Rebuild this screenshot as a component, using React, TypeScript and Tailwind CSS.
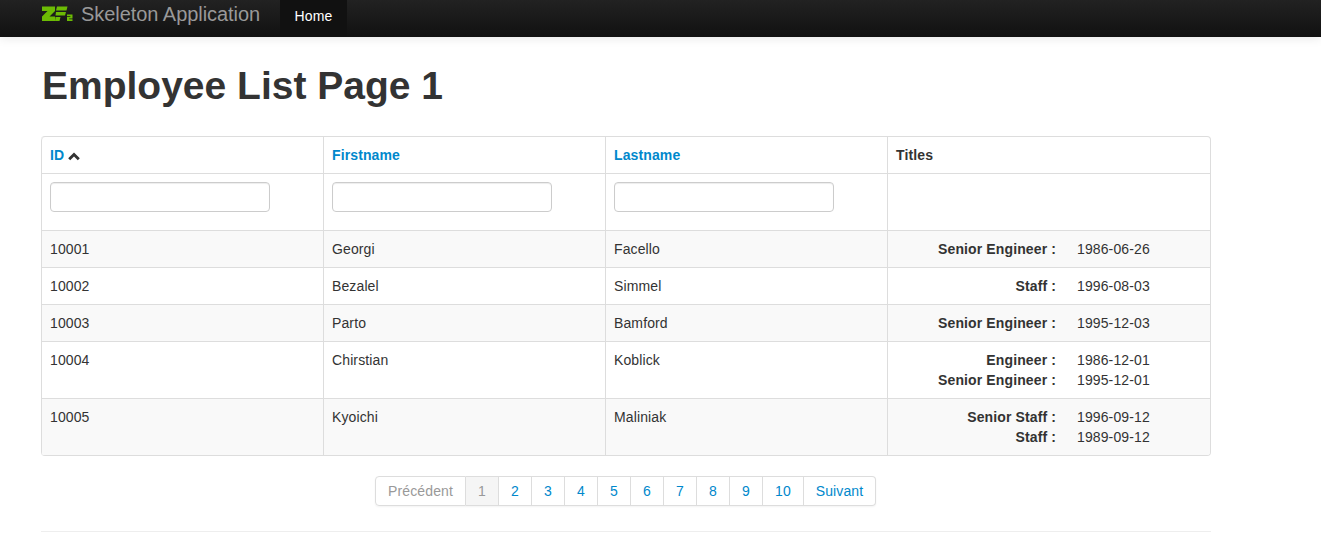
const employees = [
  { id: "10001", first: "Georgi", last: "Facello", titles: [["Senior Engineer :", "1986-06-26"]] },
  { id: "10002", first: "Bezalel", last: "Simmel", titles: [["Staff :", "1996-08-03"]] },
  { id: "10003", first: "Parto", last: "Bamford", titles: [["Senior Engineer :", "1995-12-03"]] },
  {
    id: "10004",
    first: "Chirstian",
    last: "Koblick",
    titles: [
      ["Engineer :", "1986-12-01"],
      ["Senior Engineer :", "1995-12-01"],
    ],
  },
  {
    id: "10005",
    first: "Kyoichi",
    last: "Maliniak",
    titles: [
      ["Senior Staff :", "1996-09-12"],
      ["Staff :", "1989-09-12"],
    ],
  },
];

const pages = ["2", "3", "4", "5", "6", "7", "8", "9"];

function ZfLogo() {
  return (
    <svg width="32" height="16" viewBox="0 0 32 16" className="block" fill="#6cbb04">
      <path d="M1 0.5H14V5L8.5 10.5H14V15H1V10.5L6.5 5H1Z" />
      <path d="M16 0.5H26.5L25.5 4.5H15Z" />
      <path d="M15 6H25L24 9.5H14.5Z" />
      <path d="M14.5 11H19.5L18.5 15H14Z" />
      <path d="M26 8.5H31.5V12.5H28.2V13.2H31.5V15H26V11H29.4V10.2H26Z" />
    </svg>
  );
}

function Navbar() {
  return (
    <div className="h-[37px] bg-gradient-to-b from-[#222222] to-[#111111] shadow-[0_1px_10px_rgba(0,0,0,0.1)]">
      <div className="ml-[41px] flex h-full items-stretch">
        <div className="flex w-[239px] items-center gap-[8px] pb-[9px]">
          <ZfLogo />
          <span className="text-[20px] leading-[20px] tracking-[-0.05px] text-[#999999]">Skeleton Application</span>
        </div>
        <a className="flex w-[67px] items-center justify-center bg-[#111111] pb-[5px] text-[14px] text-white">Home</a>
      </div>
    </div>
  );
}

function SortIcon() {
  return (
    <svg width="12" height="9" viewBox="0 0 12 9" className="ml-[4px] inline-block" fill="#333333">
      <path d="M6 0.5L11.8 6.2L9.8 8.2L6 4.5L2.2 8.2L0.2 6.2Z" />
    </svg>
  );
}

function EmployeeTable() {
  const th = "border-l border-[#dddddd] p-[8px] text-left align-top font-bold";
  const td = "border-l border-t border-[#dddddd] p-[8px] align-top";
  const filter = "block h-[30px] w-[220px] rounded-[4px] border border-[#cccccc] bg-white shadow-[inset_0_1px_1px_rgba(0,0,0,0.075)]";

  return (
    <table className="w-[1170px] table-fixed border-separate border-spacing-0 overflow-hidden rounded-[4px] border border-l-0 border-[#dddddd]">
      <colgroup>
        <col className="w-[282px]" />
        <col className="w-[282px]" />
        <col className="w-[282px]" />
        <col />
      </colgroup>
      <thead>
        <tr>
          <th className={`${th} rounded-tl-[4px]`}>
            <a className="text-[#0088cc]">ID</a>
            <SortIcon />
          </th>
          <th className={th}>
            <a className="text-[#0088cc]">Firstname</a>
          </th>
          <th className={th}>
            <a className="text-[#0088cc]">Lastname</a>
          </th>
          <th className={th}>Titles</th>
        </tr>
        <tr>
          <td className={td}>
            <input className={`${filter} mb-[10px]`} />
          </td>
          <td className={td}>
            <input className={`${filter} mb-[10px]`} />
          </td>
          <td className={td}>
            <input className={`${filter} mb-[10px]`} />
          </td>
          <td className={td} />
        </tr>
      </thead>
      <tbody>
        {employees.map((e, i) => (
          <tr key={e.id} className={i % 2 === 0 ? "bg-[#f9f9f9]" : ""}>
            <td className={td}>{e.id}</td>
            <td className={td}>{e.first}</td>
            <td className={td}>{e.last}</td>
            <td className={td}>
              {e.titles.map(([title, date]) => (
                <div key={title + date} className="flex">
                  <div className="w-[160px] text-right font-bold">{title}</div>
                  <div className="ml-[20px] pl-[1px]">{date}</div>
                </div>
              ))}
            </td>
          </tr>
        ))}
      </tbody>
    </table>
  );
}

function Pagination() {
  const item = "border-y border-r border-[#dddddd] py-[4px] text-center";
  return (
    <div className="mt-[20px] flex justify-center pr-[1px]">
      <div className="flex rounded-[4px] shadow-[0_1px_2px_rgba(0,0,0,0.05)]">
        <span className="w-[91px] rounded-l-[4px] border border-[#dddddd] py-[4px] text-center text-[#999999]">Précédent</span>
        <span className={`${item} w-[33px] bg-[#f5f5f5] text-[#999999]`}>1</span>
        {pages.map((p) => (
          <a key={p} className={`${item} w-[33px] text-[#0088cc]`}>
            {p}
          </a>
        ))}
        <a className={`${item} w-[41px] text-[#0088cc]`}>10</a>
        <a className={`${item} w-[72px] rounded-r-[4px] text-[#0088cc]`}>Suivant</a>
      </div>
    </div>
  );
}

export default function App() {
  return (
    <div className="h-[539px] overflow-hidden bg-white font-['Liberation_Sans',Arial,sans-serif] text-[14px] leading-[20px] tracking-[0.12px] text-[#333333]">
      <Navbar />
      <div className="ml-[41px] w-[1170px]">
        <h1 className="mt-[29px] mb-[30px] pl-[1px] text-[39px] leading-[40px] font-bold tracking-normal">Employee List Page 1</h1>
        <EmployeeTable />
        <Pagination />
        <hr className="mt-[25px] border-t border-[#eeeeee]" />
      </div>
    </div>
  );
}
